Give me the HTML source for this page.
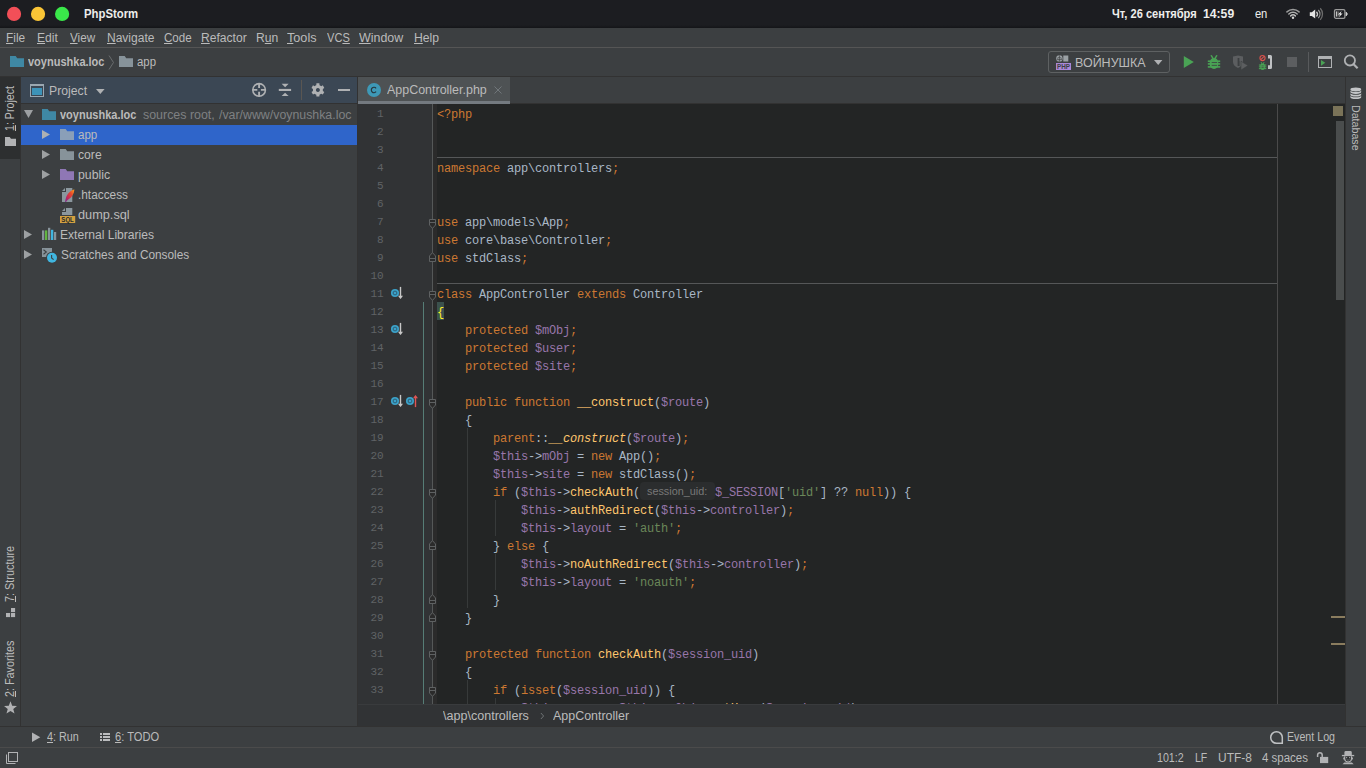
<!DOCTYPE html><html><head><meta charset="utf-8"><title>PhpStorm</title><style>

html,body{margin:0;padding:0;background:#3c3f41;}
body{width:1366px;height:768px;position:relative;overflow:hidden;font-family:"Liberation Sans",sans-serif;}
div,svg,.t{position:absolute;}
.t{white-space:pre;line-height:normal;font-family:"Liberation Sans",sans-serif;}
.mo{font-family:"Liberation Mono",monospace;}
u{text-decoration:underline;text-underline-offset:1px;}
.m{display:inline-block;width:0;height:0;}

</style></head><body>
<div style="left:0px;top:0px;width:1366px;height:28px;background:#1c1d21;"></div>
<div style="left:0px;top:25px;width:1366px;height:3px;background:linear-gradient(#1c1d21,#141518);"></div>
<div style="left:0px;top:28px;width:1366px;height:19px;background:#3c3f41;"></div>
<div style="left:0px;top:47px;width:1366px;height:1px;background:#555555;"></div>
<div style="left:0px;top:48px;width:1366px;height:28px;background:#3c3f41;"></div>
<div style="left:0px;top:76px;width:1366px;height:1px;background:#323232;"></div>
<div style="left:0px;top:77px;width:20px;height:649px;background:#3c3f41;"></div>
<div style="left:0px;top:77px;width:20px;height:82px;background:#2d2f30;"></div>
<div style="left:20px;top:77px;width:1px;height:649px;background:#323232;"></div>
<div style="left:21px;top:77px;width:336px;height:27px;background:#3b4754;"></div>
<div style="left:21px;top:103px;width:336px;height:1px;background:#323232;"></div>
<div style="left:21px;top:104px;width:336px;height:622px;background:#3c3f41;"></div>
<div style="left:21px;top:125px;width:336px;height:20px;background:#2f65ca;"></div>
<div style="left:357px;top:77px;width:1px;height:649px;background:#323232;"></div>
<div style="left:358px;top:77px;width:987px;height:27px;background:#3c3f41;"></div>
<div style="left:358px;top:77px;width:152px;height:24px;background:#4e5254;"></div>
<div style="left:358px;top:101px;width:152px;height:3px;background:#747a80;"></div>
<div style="left:510px;top:103px;width:835px;height:1px;background:#323232;"></div>
<div style="left:358px;top:104px;width:987px;height:600px;background:#232525;"></div>
<div style="left:358px;top:104px;width:74px;height:600px;background:#313335;"></div>
<div style="left:432px;top:104px;width:1px;height:600px;background:#555858;"></div>
<div style="left:433px;top:104px;width:4px;height:600px;background:#2b2b2b;"></div>
<div style="left:423px;top:302px;width:1px;height:402px;background:#567d76;"></div>
<div style="left:1277px;top:104px;width:1px;height:600px;background:#4a4a4a;"></div>
<div style="left:437px;top:157px;width:840px;height:1px;background:#555758;"></div>
<div style="left:437px;top:283px;width:840px;height:1px;background:#555758;"></div>
<div style="left:437px;top:302px;width:7px;height:18px;background:#3b514d;"></div>
<div style="left:1333px;top:106px;width:10px;height:10px;background:#7a7358;"></div>
<div style="left:1336px;top:121px;width:8px;height:179px;background:#4a4d4d;"></div>
<div style="left:1331px;top:616px;width:14px;height:2px;background:#8a7c5e;"></div>
<div style="left:1331px;top:643px;width:14px;height:2px;background:#8a7c5e;"></div>
<div style="left:358px;top:704px;width:987px;height:22px;background:#313335;z-index:2;"></div>
<div style="left:358px;top:704px;width:987px;height:1px;background:#393b3d;z-index:2;"></div>
<div style="left:1345px;top:77px;width:1px;height:649px;background:#323232;"></div>
<div style="left:1346px;top:77px;width:20px;height:649px;background:#3c3f41;"></div>
<div style="left:0px;top:726px;width:1366px;height:1px;background:#323232;"></div>
<div style="left:0px;top:727px;width:1366px;height:20px;background:#3c3f41;"></div>
<div style="left:0px;top:747px;width:1366px;height:1px;background:#4b4b4b;"></div>
<div style="left:0px;top:748px;width:1366px;height:20px;background:#3c3f41;"></div>
<div style="left:640px;top:482px;width:75px;height:18px;background:#2b2d2e;border-radius:4px;"></div>
<div style="left:301px;top:80px;width:1px;height:20px;background:#5a5652;"></div>
<div style="left:338px;top:89px;width:12px;height:2px;background:#afb1b3;"></div>
<div style="left:467px;top:428px;width:1px;height:180px;background:#373a3a;"></div>
<div style="left:495px;top:500px;width:1px;height:36px;background:#373a3a;"></div>
<div style="left:495px;top:554px;width:1px;height:36px;background:#373a3a;"></div>
<div style="left:467px;top:680px;width:1px;height:36px;background:#373a3a;"></div>
<div style="left:495px;top:698px;width:1px;height:18px;background:#373a3a;"></div>
<div style="left:1048px;top:51px;width:120px;height:20px;border:1px solid #5e6162;border-radius:3px;"></div>
<div style="left:1287px;top:57px;width:10px;height:10px;background:#5c5e60;"></div>
<div style="left:1308px;top:52px;width:1px;height:20px;background:#585a5c;"></div>
<div style="left:100px;top:733px;width:2px;height:2px;background:#bbbcbe;"></div>
<div style="left:103px;top:733px;width:7px;height:2px;background:#bbbcbe;"></div>
<div style="left:100px;top:736px;width:2px;height:2px;background:#bbbcbe;"></div>
<div style="left:103px;top:736px;width:7px;height:2px;background:#bbbcbe;"></div>
<div style="left:100px;top:739px;width:2px;height:2px;background:#bbbcbe;"></div>
<div style="left:103px;top:739px;width:7px;height:2px;background:#bbbcbe;"></div>
<svg style="left:0px;top:0px;" width="80" height="28" viewBox="0 0 80 28"><circle cx="14.05" cy="13.9" r="7.1" fill="#f24f58"/><circle cx="38.05" cy="13.9" r="7.1" fill="#fac536"/><circle cx="62.1" cy="13.9" r="7.1" fill="#3ae84a"/></svg>
<svg style="left:10px;top:56px;" width="14" height="11" viewBox="0 0 14 11"><path d="M0,0H5.7L7.2,2.2H14V11H0Z" fill="#3f88a4"/></svg>
<svg style="left:119px;top:56px;" width="14" height="11" viewBox="0 0 14 11"><path d="M0,0H5.7L7.2,2.2H14V11H0Z" fill="#87939a"/></svg>
<svg style="left:108px;top:55px;" width="7" height="15" viewBox="0 0 7 15"><path d="M1,0.5L5.5,7.5L1,14.5" fill="none" stroke="#6a6d6f" stroke-width="1"/></svg>
<svg style="left:24px;top:110px;" width="9" height="8" viewBox="0 0 9 8"><path d="M0,0H9L4.5,8Z" fill="#9da0a2"/></svg>
<svg style="left:42px;top:109px;" width="14" height="11" viewBox="0 0 14 11"><path d="M0,0H5.7L7.2,2.2H14V11H0Z" fill="#3f88a4"/></svg>
<svg style="left:42px;top:130px;" width="8" height="9" viewBox="0 0 8 9"><path d="M0,0L8,4.5L0,9Z" fill="#adb0b3"/></svg>
<svg style="left:60px;top:129px;" width="14" height="11" viewBox="0 0 14 11"><path d="M0,0H5.7L7.2,2.2H14V11H0Z" fill="#8a9fb8"/></svg>
<svg style="left:42px;top:150px;" width="8" height="9" viewBox="0 0 8 9"><path d="M0,0L8,4.5L0,9Z" fill="#9da0a2"/></svg>
<svg style="left:60px;top:149px;" width="14" height="11" viewBox="0 0 14 11"><path d="M0,0H5.7L7.2,2.2H14V11H0Z" fill="#87939a"/></svg>
<svg style="left:42px;top:170px;" width="8" height="9" viewBox="0 0 8 9"><path d="M0,0L8,4.5L0,9Z" fill="#9da0a2"/></svg>
<svg style="left:60px;top:169px;" width="14" height="11" viewBox="0 0 14 11"><path d="M0,0H5.7L7.2,2.2H14V11H0Z" fill="#8f77b5"/></svg>
<svg style="left:24px;top:230px;" width="8" height="9" viewBox="0 0 8 9"><path d="M0,0L8,4.5L0,9Z" fill="#9da0a2"/></svg>
<svg style="left:24px;top:250px;" width="8" height="9" viewBox="0 0 8 9"><path d="M0,0L8,4.5L0,9Z" fill="#9da0a2"/></svg>
<svg style="left:60px;top:187px;" width="16" height="16" viewBox="0 0 16 16"><defs><linearGradient id="fe" x1="1" y1="0" x2="0" y2="1"><stop offset="0" stop-color="#f7a41d"/><stop offset="0.35" stop-color="#e8472b"/><stop offset="0.7" stop-color="#c4265c"/><stop offset="1" stop-color="#6f2c91"/></linearGradient></defs>
<path d="M6,1H12.3V15H2V5H6Z" fill="#8b979e"/><path d="M2,4L5,1V4Z" fill="#8b979e"/>
<path d="M14.4,2.4C10.8,3 7.6,6.3 6.2,10C5.6,11.6 5.3,13.2 5.1,14.9L6.1,15C6.7,13.6 7.9,12.8 9.3,11.8C12,9.7 14.2,6.8 14.4,2.4Z" fill="url(#fe)"/></svg>
<svg style="left:59px;top:207px;" width="17" height="17" viewBox="0 0 17 17"><path d="M7,1H13.3V8H3V5H7Z" fill="#8b979e"/><path d="M3,4L6,1V4Z" fill="#8b979e"/>
<rect x="1" y="9" width="15.2" height="7" fill="#d2a040"/>
<text x="8.6" y="15.2" font-family="Liberation Sans" font-weight="bold" font-size="6.6" text-anchor="middle" fill="#25282a" textLength="12.5" lengthAdjust="spacingAndGlyphs">SQL</text></svg>
<svg style="left:42px;top:227px;" width="15" height="14" viewBox="0 0 15 14"><rect x="0" y="3.4" width="2.3" height="9.6" fill="#87939a"/><rect x="3" y="3.4" width="2.3" height="9.6" fill="#62b543"/><rect x="6" y="0.8" width="2.3" height="12.2" fill="#87939a"/><rect x="9" y="2.8" width="2.3" height="10.2" fill="#40b6e0"/><rect x="12" y="5" width="2.2" height="8" fill="#87939a"/></svg>
<svg style="left:41px;top:247px;" width="18" height="17" viewBox="0 0 18 17"><rect x="1" y="1" width="10" height="9" fill="#87939a"/><path d="M2.5,2.8L5.3,5L2.5,7.2" fill="none" stroke="#3c3f41" stroke-width="1.1"/><circle cx="11" cy="10.8" r="6" fill="#3c3f41"/><circle cx="11" cy="10.8" r="5" fill="#40b6e0"/><path d="M10.6,8V11L12.6,12.6" fill="none" stroke="#3c3f41" stroke-width="1.1"/></svg>
<svg style="left:30px;top:84px;" width="14" height="13" viewBox="0 0 14 13"><rect x="0.5" y="0.5" width="13" height="12" fill="none" stroke="#9aa7b0" stroke-width="1"/><rect x="0" y="0" width="14" height="2" fill="#9aa7b0"/><rect x="2" y="4" width="10" height="7" fill="#3d93b8"/></svg>
<svg style="left:96px;top:89px;" width="9" height="5" viewBox="0 0 9 5"><path d="M0,0H8.6L4.3,5Z" fill="#afb1b3"/></svg>
<svg style="left:251px;top:82px;" width="16" height="16" viewBox="0 0 16 16"><circle cx="8.1" cy="7.9" r="6.3" fill="none" stroke="#afb1b3" stroke-width="1.6"/><path d="M1.6,7.9H6.3M9.9,7.9H14.6M8.1,1.4V6.1M8.1,9.7V14.4" stroke="#afb1b3" stroke-width="1.9" fill="none"/></svg>
<svg style="left:278px;top:83px;" width="14" height="14" viewBox="0 0 14 14"><rect x="0.8" y="5.9" width="12.3" height="2.1" fill="#afb1b3"/><path d="M3.6,0.8H10.6L7.1,4.2Z" fill="#afb1b3"/><path d="M3.6,13.1H10.6L7.1,9.8Z" fill="#afb1b3"/></svg>
<svg style="left:310px;top:82px;" width="16" height="16" viewBox="0 0 16 16"><path d="M5.51,3.51L6.29,3.17L6.42,1.37L9.38,1.37L9.51,3.17L10.51,3.64L11.20,4.14L12.82,3.35L14.30,5.91L12.80,6.92L12.90,8.03L12.80,8.88L14.30,9.89L12.82,12.45L11.20,11.66L10.29,12.29L9.51,12.63L9.38,14.43L6.42,14.43L6.29,12.63L5.29,12.16L4.60,11.66L2.98,12.45L1.50,9.89L3.00,8.88L2.90,7.77L3.00,6.92L1.50,5.91L2.98,3.35L4.60,4.14ZM7.9,5.9a2,2 0 1,0 0.001,0Z" fill="#afb1b3" fill-rule="evenodd"/></svg>
<svg style="left:366px;top:82px;" width="16" height="16" viewBox="0 0 16 16"><circle cx="8" cy="8" r="7" fill="#3e99b7"/><path d="M10.1,6.3A2.7,2.7 0 1,0 10.1,9.7" fill="none" stroke="#26353d" stroke-width="1.1"/></svg>
<svg style="left:494px;top:86px;" width="8" height="8" viewBox="0 0 8 8"><path d="M0.5,0.5L7.5,7.5M7.5,0.5L0.5,7.5" stroke="#70767a" stroke-width="1" fill="none"/></svg>
<svg style="left:538px;top:711px;z-index:3;" width="8" height="10" viewBox="0 0 8 10"><path d="M2.9,2L5.6,5L2.9,8" fill="none" stroke="#6e7274" stroke-width="1"/></svg>
<svg style="left:390px;top:286px;" width="14" height="14" viewBox="0 0 14 14"><circle cx="5" cy="7" r="4.05" fill="#3ba2c9"/><circle cx="5" cy="7" r="1.9" fill="none" stroke="#2b566c" stroke-width="0.9"/><path d="M10.5,0.9V12.2" stroke="#c8c8c8" stroke-width="1.4" fill="none"/><path d="M8,9.8H13L10.5,13.1Z" fill="#c8c8c8"/></svg>
<svg style="left:390px;top:322px;" width="14" height="14" viewBox="0 0 14 14"><circle cx="5" cy="7" r="4.05" fill="#3ba2c9"/><circle cx="5" cy="7" r="1.9" fill="none" stroke="#2b566c" stroke-width="0.9"/><path d="M10.5,0.9V12.2" stroke="#c8c8c8" stroke-width="1.4" fill="none"/><path d="M8,9.8H13L10.5,13.1Z" fill="#c8c8c8"/></svg>
<svg style="left:390px;top:394px;" width="14" height="14" viewBox="0 0 14 14"><circle cx="5" cy="7" r="4.05" fill="#3ba2c9"/><circle cx="5" cy="7" r="1.9" fill="none" stroke="#2b566c" stroke-width="0.9"/><path d="M10.5,0.9V12.2" stroke="#c8c8c8" stroke-width="1.4" fill="none"/><path d="M8,9.8H13L10.5,13.1Z" fill="#c8c8c8"/></svg>
<svg style="left:405px;top:394px;" width="14" height="14" viewBox="0 0 14 14"><circle cx="5" cy="7" r="4.05" fill="#3ba2c9"/><circle cx="5" cy="7" r="1.9" fill="none" stroke="#2b566c" stroke-width="0.9"/><path d="M10.5,1.8V13.1" stroke="#e05555" stroke-width="1.4" fill="none"/><path d="M8,4.2H13L10.5,0.9Z" fill="#e05555"/></svg>
<svg style="left:428px;top:218px;" width="9" height="12" viewBox="0 0 9 12"><path d="M1.5,1.5H7.5V7L4.5,10.4L1.5,7Z" fill="#2b2b2b" stroke="#5e6162" stroke-width="1"/><path d="M1.5,4.5H7.5" stroke="#5e6162" stroke-width="1"/></svg>
<svg style="left:428px;top:290px;" width="9" height="12" viewBox="0 0 9 12"><path d="M1.5,1.5H7.5V7L4.5,10.4L1.5,7Z" fill="#2b2b2b" stroke="#5e6162" stroke-width="1"/><path d="M1.5,4.5H7.5" stroke="#5e6162" stroke-width="1"/></svg>
<svg style="left:428px;top:398px;" width="9" height="12" viewBox="0 0 9 12"><path d="M1.5,1.5H7.5V7L4.5,10.4L1.5,7Z" fill="#2b2b2b" stroke="#5e6162" stroke-width="1"/><path d="M1.5,4.5H7.5" stroke="#5e6162" stroke-width="1"/></svg>
<svg style="left:428px;top:488px;" width="9" height="12" viewBox="0 0 9 12"><path d="M1.5,1.5H7.5V7L4.5,10.4L1.5,7Z" fill="#2b2b2b" stroke="#5e6162" stroke-width="1"/><path d="M1.5,4.5H7.5" stroke="#5e6162" stroke-width="1"/></svg>
<svg style="left:428px;top:650px;" width="9" height="12" viewBox="0 0 9 12"><path d="M1.5,1.5H7.5V7L4.5,10.4L1.5,7Z" fill="#2b2b2b" stroke="#5e6162" stroke-width="1"/><path d="M1.5,4.5H7.5" stroke="#5e6162" stroke-width="1"/></svg>
<svg style="left:428px;top:686px;" width="9" height="12" viewBox="0 0 9 12"><path d="M1.5,1.5H7.5V7L4.5,10.4L1.5,7Z" fill="#2b2b2b" stroke="#5e6162" stroke-width="1"/><path d="M1.5,4.5H7.5" stroke="#5e6162" stroke-width="1"/></svg>
<svg style="left:428px;top:251px;" width="9" height="12" viewBox="0 0 9 12"><path d="M1.5,10.5H7.5V5L4.5,1.6L1.5,5Z" fill="#2b2b2b" stroke="#5e6162" stroke-width="1"/><path d="M1.5,7.5H7.5" stroke="#5e6162" stroke-width="1"/></svg>
<svg style="left:428px;top:539px;" width="9" height="12" viewBox="0 0 9 12"><path d="M1.5,10.5H7.5V5L4.5,1.6L1.5,5Z" fill="#2b2b2b" stroke="#5e6162" stroke-width="1"/><path d="M1.5,7.5H7.5" stroke="#5e6162" stroke-width="1"/></svg>
<svg style="left:428px;top:593px;" width="9" height="12" viewBox="0 0 9 12"><path d="M1.5,10.5H7.5V5L4.5,1.6L1.5,5Z" fill="#2b2b2b" stroke="#5e6162" stroke-width="1"/><path d="M1.5,7.5H7.5" stroke="#5e6162" stroke-width="1"/></svg>
<svg style="left:428px;top:611px;" width="9" height="12" viewBox="0 0 9 12"><path d="M1.5,10.5H7.5V5L4.5,1.6L1.5,5Z" fill="#2b2b2b" stroke="#5e6162" stroke-width="1"/><path d="M1.5,7.5H7.5" stroke="#5e6162" stroke-width="1"/></svg>
<svg style="left:1056px;top:55px;" width="16" height="16" viewBox="0 0 16 16"><circle cx="3.4" cy="3.4" r="3.2" fill="#9aa0a4"/><path d="M1,3.4Q3.4,1.2 5.8,3.4M3.4,0.4V6.4M0.8,4.6H6" stroke="#3c3f41" stroke-width="0.7" fill="none"/>
<rect x="7.3" y="0.5" width="5" height="6" fill="#9aa0a4"/>
<rect x="0" y="8" width="15" height="7" fill="#a987d8"/>
<text x="7.5" y="14.2" font-family="Liberation Sans" font-weight="bold" font-size="6.4" text-anchor="middle" fill="#3c3f41" textLength="13" lengthAdjust="spacingAndGlyphs">PHP</text></svg>
<svg style="left:1154px;top:60px;" width="9" height="5" viewBox="0 0 9 5"><path d="M0,0H8.4L4.2,5Z" fill="#afb1b3"/></svg>
<svg style="left:1183px;top:55px;" width="12" height="14" viewBox="0 0 12 14"><path d="M0.8,1L10.8,7L0.8,13Z" fill="#4aa355"/></svg>
<svg style="left:1207px;top:55px;" width="14" height="15" viewBox="0 0 14 15"><g transform="translate(0.5,0) scale(1)" fill="#4aa355" stroke="none">
<path d="M6.5,3C9.2,3 10.9,5 10.9,8.6C10.9,12 9.2,14 6.5,14C3.8,14 2.1,12 2.1,8.6C2.1,5 3.8,3 6.5,3Z"/>
<path d="M2.9,0.4L4.3,0L6.4,3.6L5,4Z"/><path d="M10.1,0.4L8.7,0L6.6,3.6L8,4Z"/>
<rect x="0.3" y="5.4" width="12.4" height="1.6"/><rect x="0.3" y="8.1" width="12.4" height="1.6"/><rect x="0.3" y="11.1" width="12.4" height="1.6"/>
</g><g transform="translate(0.5,0) scale(1)" fill="#3c3f41"><rect x="4.2" y="7.05" width="5.4" height="0.8"/><rect x="4.2" y="9.9" width="5.4" height="0.8"/></g></svg>
<svg style="left:1232px;top:55px;" width="17" height="16" viewBox="0 0 17 16"><path d="M1,1.6L6,0.6L11,1.6V7C11,10 8.5,12 6,13C3.5,12 1,10 1,7Z" fill="#5c5e60"/><rect x="5.6" y="3" width="2" height="8" fill="#3c3f41"/><path d="M7.6,3H9.4V6L7.6,6Z" fill="#5c5e60"/><path d="M9,6.2L16,10.6L9,15Z" fill="#5c5e60" stroke="#3c3f41" stroke-width="0.6"/></svg>
<svg style="left:1258px;top:54px;" width="15" height="17" viewBox="0 0 15 17"><circle cx="4.5" cy="4" r="2.55" fill="none" stroke="#d8514c" stroke-width="1.15"/><path d="M2.8,5.7L6.2,2.3" stroke="#d8514c" stroke-width="1.1"/><g fill="#4aa355"><ellipse cx="4.6" cy="12.7" rx="2.3" ry="3.2"/><path d="M2.6,8.2L3.5,8L4.7,10.2L3.9,10.5Z"/><path d="M6.6,8.2L5.7,8L4.5,10.2L5.3,10.5Z"/><rect x="0.9" y="10.5" width="7.4" height="1.05"/><rect x="0.9" y="12.3" width="7.4" height="1.05"/><rect x="0.9" y="14.1" width="7.4" height="1.05"/></g><g fill="#3c3f41"><rect x="3.5" y="11.6" width="2.2" height="0.65"/><rect x="3.5" y="13.4" width="2.2" height="0.65"/></g><path d="M10,1H12.6Q14,1 14,2.5V13.5Q14,15 12.6,15H10V11.2H12V4.6H10Z" fill="#bfc1c3"/></svg>
<svg style="left:1318px;top:56px;" width="14" height="12" viewBox="0 0 14 12"><rect x="0.5" y="0.5" width="13" height="11" fill="#3c3f41" stroke="#afb1b3" stroke-width="1"/><rect x="0" y="0" width="14" height="3" fill="#afb1b3"/><path d="M3,4L7.3,6.8L3,9.7Z" fill="#4aa355"/></svg>
<svg style="left:1343px;top:54px;" width="16" height="16" viewBox="0 0 16 16"><circle cx="6.9" cy="6.4" r="5.1" fill="none" stroke="#afb1b3" stroke-width="1.8"/><path d="M10.6,10.2L14.6,14.3" stroke="#afb1b3" stroke-width="2.2"/></svg>
<svg style="left:1284px;top:5.2px;" width="18" height="16" viewBox="0 0 18 16"><g fill="none" stroke-linecap="round"><path d="M2.93,6.89A8.9,8.9 0 0,1 15.07,6.89" stroke="#9b9b9b" stroke-width="1.5"/><path d="M4.84,8.94A6.1,6.1 0 0,1 13.16,8.94" stroke="#adadad" stroke-width="1.5"/><path d="M6.68,10.91A3.4,3.4 0 0,1 11.32,10.91" stroke="#c0c0c0" stroke-width="1.5"/></g><circle cx="9" cy="12.7" r="1.2" fill="#d6d6d6"/></svg>
<svg style="left:1308px;top:6px;" width="18" height="16" viewBox="0 0 18 16"><path d="M1.8,6.3H3.8L7.2,3.6V12.6L3.8,9.9H1.8Z" fill="#e4e4e4"/><g fill="none"><path d="M8.48,5.69A3.6,3.6 0 0,1 8.48,10.51" stroke="#c8c8c8" stroke-width="1.3"/><path d="M10.33,4.02A6.1,6.1 0 0,1 10.33,12.18" stroke="#9a9a9a" stroke-width="1.3"/><path d="M12.27,2.28A8.7,8.7 0 0,1 12.27,13.92" stroke="#6c6c6c" stroke-width="1.3"/></g></svg>
<svg style="left:1332px;top:7px;" width="18" height="14" viewBox="0 0 18 14"><rect x="2.5" y="2.7" width="10.4" height="8.6" rx="1.4" fill="#1c1d21" stroke="#9c9c9c" stroke-width="1.3"/><rect x="3.9" y="4.4" width="1.3" height="5.2" fill="#c4c4c4"/><rect x="5.2" y="4.4" width="2" height="5.2" fill="#5c5c5c"/><path d="M9.6,4L5.9,7.5H8L6.8,10.2L10.6,6.5H8.6Z" fill="#ececec"/><path d="M13.9,5V9L16.1,7Z" fill="#cfcfcf"/><rect x="13.8" y="5" width="1" height="4" fill="#cfcfcf"/></svg>
<svg style="left:5px;top:137px;" width="11" height="9" viewBox="0 0 11 9"><path d="M0,0H4.7L6,1.8H11V9H0Z" fill="#b1b2b4"/></svg>
<svg style="left:5px;top:607px;" width="11" height="11" viewBox="0 0 11 11"><rect x="6" y="1" width="4.1" height="4.1" fill="#b1b2b4"/><rect x="1" y="6" width="4.1" height="4.1" fill="#b1b2b4"/><rect x="6" y="6" width="4.1" height="4.1" fill="#b1b2b4"/></svg>
<svg style="left:3px;top:700px;" width="15" height="15" viewBox="0 0 15 15"><path d="M7.50,1.20L9.20,5.65L13.97,5.90L10.26,8.90L11.50,13.50L7.50,10.90L3.50,13.50L4.74,8.90L1.03,5.90L5.80,5.65Z" fill="#b1b2b4"/></svg>
<svg style="left:1349px;top:87px;" width="14" height="14" viewBox="0 0 14 14"><g fill="#c3c5c7"><ellipse cx="6.8" cy="2.5" rx="5.4" ry="1.9"/><path d="M1.4,3.3A5.4,1.8 0 0,0 12.2,3.3V5.1A5.4,1.8 0 0,1 1.4,5.1Z"/><path d="M1.4,5.9A5.4,1.8 0 0,0 12.2,5.9V7.7A5.4,1.8 0 0,1 1.4,7.7Z"/><path d="M1.4,8.5A5.4,1.8 0 0,0 12.2,8.5V10.3A5.4,1.8 0 0,1 1.4,10.3Z"/></g></svg>
<svg style="left:31px;top:732px;" width="10" height="11" viewBox="0 0 10 11"><path d="M1,0.5L9.3,5.3L1,10Z" fill="#b1b2b4"/></svg>
<svg style="left:1269px;top:730px;" width="15" height="15" viewBox="0 0 15 15"><path d="M13.3,7.5A5.8,5.8 0 1,0 7.5,13.3H13.3Z" fill="none" stroke="#c0c2c4" stroke-width="1.5"/></svg>
<svg style="left:5px;top:751px;" width="14" height="14" viewBox="0 0 14 14"><rect x="3.5" y="1.5" width="9" height="9" fill="none" stroke="#b1b2b4" stroke-width="1"/><path d="M1.5,3.5V12.5H10.5" fill="none" stroke="#b1b2b4" stroke-width="1"/></svg>
<svg style="left:1316px;top:751px;" width="13" height="13" viewBox="0 0 13 13"><path d="M1.6,5.9V4A2.3,2.3 0 0,1 6.2,4V6" fill="none" stroke="#b1b2b4" stroke-width="1.5"/><rect x="4" y="5.9" width="8.2" height="6.2" fill="#b1b2b4"/></svg>
<svg style="left:1341px;top:750px;" width="14" height="15" viewBox="0 0 14 15"><path d="M3.4,4.9V2.4Q3.4,1 4.8,1H9.4Q10.8,1 10.8,2.4V4.9Z" fill="#b1b2b4"/><rect x="0.9" y="4.9" width="12.3" height="1.3" fill="#b1b2b4"/><path d="M3.2,6.2H11V7.2Q12,7.2 12,8.4Q12,9.6 11,9.6Q10.6,12.2 7.1,12.6Q3.6,12.2 3.2,9.6Q2.2,9.6 2.2,8.4Q2.2,7.2 3.2,7.2Z" fill="#b1b2b4"/><path d="M4.3,6.3H9.9V9Q9.9,11.2 7.1,11.6Q4.3,11.2 4.3,9Z" fill="#2c2e30"/><rect x="5" y="7.2" width="1.2" height="1" fill="#b1b2b4"/><rect x="8" y="7.2" width="1.2" height="1" fill="#b1b2b4"/><path d="M5.7,9.7Q7.1,10.6 8.5,9.7" stroke="#8a8c8e" stroke-width="0.7" fill="none"/><path d="M1.5,14.2L3.3,12.5H10.9L12.7,14.2Z" fill="#b1b2b4"/></svg>
<span class="t" style="font-size:12.5px;color:#eeeeec;font-weight:bold;left:83.5px;top:7.2px;transform-origin:0 0;transform:scaleX(0.9076);">PhpStorm</span>
<span class="t" style="font-size:12.5px;color:#eeeeec;font-weight:bold;left:1112.0px;top:7.2px;transform-origin:0 0;transform:scaleX(0.8852);">Чт, 26 сентября</span>
<span class="t" style="font-size:12.5px;color:#eeeeec;font-weight:bold;left:1203.2px;top:7.2px;transform-origin:0 0;transform:scaleX(0.9744);">14:59</span>
<span class="t" style="font-size:13px;color:#eeeeec;letter-spacing:-0.393px;left:1255.2px;top:6px;transform-origin:0 0;transform:scaleX(0.8600);">en</span>
<span class="t" style="font-size:12.5px;color:#bbbbbb;left:5.85px;top:31px;transform-origin:0 0;transform:scaleX(0.9484);"><u>F</u>ile</span>
<span class="t" style="font-size:12.5px;color:#bbbbbb;left:36.63px;top:31px;transform-origin:0 0;transform:scaleX(0.9684);"><u>E</u>dit</span>
<span class="t" style="font-size:12.5px;color:#bbbbbb;left:70.3px;top:31px;transform-origin:0 0;transform:scaleX(0.9339);"><u>V</u>iew</span>
<span class="t" style="font-size:12.5px;color:#bbbbbb;left:106.84px;top:31px;transform-origin:0 0;transform:scaleX(0.9611);"><u>N</u>avigate</span>
<span class="t" style="font-size:12.5px;color:#bbbbbb;left:164.3px;top:31px;transform-origin:0 0;transform:scaleX(0.9255);"><u>C</u>ode</span>
<span class="t" style="font-size:12.5px;color:#bbbbbb;left:200.63px;top:31px;transform-origin:0 0;transform:scaleX(0.9679);"><u>R</u>efactor</span>
<span class="t" style="font-size:12.5px;color:#bbbbbb;left:255.53px;top:31px;transform-origin:0 0;transform:scaleX(0.9691);">R<u>u</u>n</span>
<span class="t" style="font-size:12.5px;color:#bbbbbb;left:287.1px;top:31px;transform-origin:0 0;transform:scaleX(1.0128);"><u>T</u>ools</span>
<span class="t" style="font-size:12.5px;color:#bbbbbb;left:326.5px;top:31px;transform-origin:0 0;transform:scaleX(0.8871);">VC<u>S</u></span>
<span class="t" style="font-size:12.5px;color:#bbbbbb;left:359.2px;top:31px;transform-origin:0 0;transform:scaleX(0.9927);"><u>W</u>indow</span>
<span class="t" style="font-size:12.5px;color:#bbbbbb;left:413.53px;top:31px;transform-origin:0 0;transform:scaleX(0.9735);"><u>H</u>elp</span>
<span class="t" style="font-size:12.5px;color:#bbbbbb;font-weight:bold;left:28.0px;top:55px;transform-origin:0 0;transform:scaleX(0.8805);">voynushka.loc</span>
<span class="t" style="font-size:12.5px;color:#bbbbbb;left:137.4px;top:55px;transform-origin:0 0;transform:scaleX(0.9089);">app</span>
<span class="t" style="font-size:12.5px;color:#bbbbbb;left:48.62px;top:84px;transform-origin:0 0;transform:scaleX(0.9784);">Project</span>
<span class="t" style="font-size:12.5px;color:#bbbbbb;font-weight:bold;left:60.2px;top:108px;transform-origin:0 0;transform:scaleX(0.8793);">voynushka.loc</span>
<span class="t" style="font-size:12.5px;color:#7f8183;left:142.5px;top:108px;transform-origin:0 0;transform:scaleX(0.9933);">sources root,</span>
<span class="t" style="font-size:12.5px;color:#7f8183;left:219.0px;top:108px;transform-origin:0 0;transform:scaleX(0.9879);">/var/www/voynushka.loc</span>
<span class="t" style="font-size:12.5px;color:#bbbbbb;left:78.2px;top:128px;transform-origin:0 0;transform:scaleX(0.9233);">app</span>
<span class="t" style="font-size:12.5px;color:#bbbbbb;left:78.2px;top:148px;transform-origin:0 0;transform:scaleX(0.9727);">core</span>
<span class="t" style="font-size:12.5px;color:#bbbbbb;left:78.2px;top:168px;transform-origin:0 0;transform:scaleX(0.9843);">public</span>
<span class="t" style="font-size:12.5px;color:#bbbbbb;left:77.85px;top:188px;transform-origin:0 0;transform:scaleX(0.9466);">.htaccess</span>
<span class="t" style="font-size:12.5px;color:#bbbbbb;left:78.2px;top:208px;transform-origin:0 0;transform:scaleX(1.0192);">dump.sql</span>
<span class="t" style="font-size:12.5px;color:#bbbbbb;left:59.53px;top:228px;transform-origin:0 0;transform:scaleX(0.9665);">External Libraries</span>
<span class="t" style="font-size:12.5px;color:#bbbbbb;left:60.5px;top:248px;transform-origin:0 0;transform:scaleX(0.9465);">Scratches and Consoles</span>
<span class="t" style="font-size:12.5px;color:#bbbbbb;left:386.6px;top:83px;transform-origin:0 0;transform:scaleX(0.9969);">AppController.php</span>
<span class="t" style="font-size:12.5px;color:#bbbbbb;z-index:3;left:442.8px;top:709.4px;transform-origin:0 0;transform:scaleX(1.0046);">\app\controllers</span>
<span class="t" style="font-size:12.5px;color:#bbbbbb;z-index:3;left:553.4px;top:709.4px;transform-origin:0 0;transform:scaleX(0.9965);">AppController</span>
<span class="t" style="font-size:12px;color:#bbbbbb;left:47.1px;top:730px;transform-origin:0 0;transform:scaleX(0.8996);"><u>4</u>: Run</span>
<span class="t" style="font-size:12px;color:#bbbbbb;left:115.2px;top:730px;transform-origin:0 0;transform:scaleX(0.9272);"><u>6</u>: TODO</span>
<span class="t" style="font-size:12px;color:#bbbbbb;left:1287.0px;top:730px;transform-origin:0 0;transform:scaleX(0.8882);">Event Log</span>
<span class="t" style="font-size:12px;color:#bbbbbb;left:1157.3px;top:751px;transform-origin:0 0;transform:scaleX(0.8895);">101:2</span>
<span class="t" style="font-size:12px;color:#bbbbbb;left:1195.0px;top:751px;transform-origin:0 0;transform:scaleX(0.8776);">LF</span>
<span class="t" style="font-size:12px;color:#bbbbbb;left:1218.0px;top:751px;transform-origin:0 0;transform:scaleX(0.9964);">UTF-8</span>
<span class="t" style="font-size:12px;color:#bbbbbb;left:1262.3px;top:751px;transform-origin:0 0;transform:scaleX(0.9577);">4 spaces</span>
<span class="t" style="font-size:12px;color:#bbbbbb;left:14.2px;top:131.2px;transform-origin:0 0;transform:rotate(-90deg) translate(0.0px,-11px) scaleX(0.8860);"><u>1</u>: Project</span>
<span class="t" style="font-size:12px;color:#bbbbbb;left:14.1px;top:602.4px;transform-origin:0 0;transform:rotate(-90deg) translate(0.0px,-11px) scaleX(0.9045);"><u>7</u>: Structure</span>
<span class="t" style="font-size:12px;color:#bbbbbb;left:14.1px;top:697px;transform-origin:0 0;transform:rotate(-90deg) translate(0.0px,-11px) scaleX(0.8981);"><u>2</u>: Favorites</span>
<span class="t" style="font-size:11px;color:#bbbbbb;left:1351.7px;top:104.7px;transform-origin:0 0;transform:rotate(90deg) translate(0.0px,-10px) scaleX(0.9687);">Database</span>
<span class="t mo" style="font-size:11px;color:#606366;letter-spacing:0.000px;left:377.0px;top:108.0px;">1</span>
<span class="t mo" style="font-size:12px;color:#a9b7c6;letter-spacing:-0.202px;left:437px;top:107.5px;"><span style="color:#cc7832;">&lt;?php</span></span>
<span class="t mo" style="font-size:11px;color:#606366;letter-spacing:0.000px;left:377.0px;top:126.0px;">2</span>
<span class="t mo" style="font-size:11px;color:#606366;letter-spacing:0.000px;left:377.0px;top:144.0px;">3</span>
<span class="t mo" style="font-size:11px;color:#606366;letter-spacing:0.000px;left:377.0px;top:162.0px;">4</span>
<span class="t mo" style="font-size:12px;color:#a9b7c6;letter-spacing:-0.202px;left:437px;top:161.5px;"><span style="color:#cc7832;">namespace </span><span style="color:#a9b7c6;">app\controllers</span><span style="color:#cc7832;">;</span></span>
<span class="t mo" style="font-size:11px;color:#606366;letter-spacing:0.000px;left:377.0px;top:180.0px;">5</span>
<span class="t mo" style="font-size:11px;color:#606366;letter-spacing:0.000px;left:377.0px;top:198.0px;">6</span>
<span class="t mo" style="font-size:11px;color:#606366;letter-spacing:0.000px;left:377.0px;top:216.0px;">7</span>
<span class="t mo" style="font-size:12px;color:#a9b7c6;letter-spacing:-0.202px;left:437px;top:215.5px;"><span style="color:#cc7832;">use </span><span style="color:#a9b7c6;">app\models\App</span><span style="color:#cc7832;">;</span></span>
<span class="t mo" style="font-size:11px;color:#606366;letter-spacing:0.000px;left:377.0px;top:234.0px;">8</span>
<span class="t mo" style="font-size:12px;color:#a9b7c6;letter-spacing:-0.202px;left:437px;top:233.5px;"><span style="color:#cc7832;">use </span><span style="color:#a9b7c6;">core\base\Controller</span><span style="color:#cc7832;">;</span></span>
<span class="t mo" style="font-size:11px;color:#606366;letter-spacing:0.000px;left:377.0px;top:252.0px;">9</span>
<span class="t mo" style="font-size:12px;color:#a9b7c6;letter-spacing:-0.202px;left:437px;top:251.5px;"><span style="color:#cc7832;">use </span><span style="color:#a9b7c6;">stdClass</span><span style="color:#cc7832;">;</span></span>
<span class="t mo" style="font-size:11px;color:#606366;letter-spacing:0.000px;left:370.4px;top:270.0px;">10</span>
<span class="t mo" style="font-size:11px;color:#606366;letter-spacing:0.000px;left:370.4px;top:288.0px;">11</span>
<span class="t mo" style="font-size:12px;color:#a9b7c6;letter-spacing:-0.202px;left:437px;top:287.5px;"><span style="color:#cc7832;">class </span><span style="color:#a9b7c6;">AppController </span><span style="color:#cc7832;">extends </span><span style="color:#a9b7c6;">Controller</span></span>
<span class="t mo" style="font-size:11px;color:#606366;letter-spacing:0.000px;left:370.4px;top:306.0px;">12</span>
<span class="t mo" style="font-size:12px;color:#a9b7c6;letter-spacing:-0.202px;left:437px;top:305.5px;"><span style="color:#ffef28;">{</span></span>
<span class="t mo" style="font-size:11px;color:#606366;letter-spacing:0.000px;left:370.4px;top:324.0px;">13</span>
<span class="t mo" style="font-size:12px;color:#a9b7c6;letter-spacing:-0.202px;left:437px;top:323.5px;"><span style="color:#cc7832;">    protected </span><span style="color:#9876aa;">$mObj</span><span style="color:#cc7832;">;</span></span>
<span class="t mo" style="font-size:11px;color:#606366;letter-spacing:0.000px;left:370.4px;top:342.0px;">14</span>
<span class="t mo" style="font-size:12px;color:#a9b7c6;letter-spacing:-0.202px;left:437px;top:341.5px;"><span style="color:#cc7832;">    protected </span><span style="color:#9876aa;">$user</span><span style="color:#cc7832;">;</span></span>
<span class="t mo" style="font-size:11px;color:#606366;letter-spacing:0.000px;left:370.4px;top:360.0px;">15</span>
<span class="t mo" style="font-size:12px;color:#a9b7c6;letter-spacing:-0.202px;left:437px;top:359.5px;"><span style="color:#cc7832;">    protected </span><span style="color:#9876aa;">$site</span><span style="color:#cc7832;">;</span></span>
<span class="t mo" style="font-size:11px;color:#606366;letter-spacing:0.000px;left:370.4px;top:378.0px;">16</span>
<span class="t mo" style="font-size:11px;color:#606366;letter-spacing:0.000px;left:370.4px;top:396.0px;">17</span>
<span class="t mo" style="font-size:12px;color:#a9b7c6;letter-spacing:-0.202px;left:437px;top:395.5px;"><span style="color:#cc7832;">    public function </span><span style="color:#ffc66d;">__construct</span><span style="color:#a9b7c6;">(</span><span style="color:#9876aa;">$route</span><span style="color:#a9b7c6;">)</span></span>
<span class="t mo" style="font-size:11px;color:#606366;letter-spacing:0.000px;left:370.4px;top:414.0px;">18</span>
<span class="t mo" style="font-size:12px;color:#a9b7c6;letter-spacing:-0.202px;left:437px;top:413.5px;"><span style="color:#a9b7c6;">    {</span></span>
<span class="t mo" style="font-size:11px;color:#606366;letter-spacing:0.000px;left:370.4px;top:432.0px;">19</span>
<span class="t mo" style="font-size:12px;color:#a9b7c6;letter-spacing:-0.202px;left:437px;top:431.5px;"><span style="color:#cc7832;">        parent</span><span style="color:#a9b7c6;">::</span><span style="color:#ffc66d;font-style:italic;">__construct</span><span style="color:#a9b7c6;">(</span><span style="color:#9876aa;">$route</span><span style="color:#a9b7c6;">)</span><span style="color:#cc7832;">;</span></span>
<span class="t mo" style="font-size:11px;color:#606366;letter-spacing:0.000px;left:370.4px;top:450.0px;">20</span>
<span class="t mo" style="font-size:12px;color:#a9b7c6;letter-spacing:-0.202px;left:437px;top:449.5px;"><span style="color:#9876aa;">        $this</span><span style="color:#a9b7c6;">-&gt;</span><span style="color:#9876aa;">mObj</span><span style="color:#a9b7c6;"> = </span><span style="color:#cc7832;">new </span><span style="color:#a9b7c6;">App()</span><span style="color:#cc7832;">;</span></span>
<span class="t mo" style="font-size:11px;color:#606366;letter-spacing:0.000px;left:370.4px;top:468.0px;">21</span>
<span class="t mo" style="font-size:12px;color:#a9b7c6;letter-spacing:-0.202px;left:437px;top:467.5px;"><span style="color:#9876aa;">        $this</span><span style="color:#a9b7c6;">-&gt;</span><span style="color:#9876aa;">site</span><span style="color:#a9b7c6;"> = </span><span style="color:#cc7832;">new </span><span style="color:#a9b7c6;">stdClass()</span><span style="color:#cc7832;">;</span></span>
<span class="t mo" style="font-size:11px;color:#606366;letter-spacing:0.000px;left:370.4px;top:486.0px;">22</span>
<span class="t mo" style="font-size:12px;color:#a9b7c6;letter-spacing:-0.202px;left:437px;top:485.5px;"><span style="color:#cc7832;">        if </span><span style="color:#a9b7c6;">(</span><span style="color:#9876aa;">$this</span><span style="color:#a9b7c6;">-&gt;</span><span style="color:#ffc66d;">checkAuth</span><span style="color:#a9b7c6;">(</span><span style="display:inline-block;width:75px;"></span><span style="color:#9876aa;">$_SESSION</span><span style="color:#a9b7c6;">[</span><span style="color:#6a8759;">&#x27;uid&#x27;</span><span style="color:#a9b7c6;">] ?? </span><span style="color:#cc7832;">null</span><span style="color:#a9b7c6;">)) {</span></span>
<span class="t mo" style="font-size:11px;color:#606366;letter-spacing:0.000px;left:370.4px;top:504.0px;">23</span>
<span class="t mo" style="font-size:12px;color:#a9b7c6;letter-spacing:-0.202px;left:437px;top:503.5px;"><span style="color:#9876aa;">            $this</span><span style="color:#a9b7c6;">-&gt;</span><span style="color:#ffc66d;">authRedirect</span><span style="color:#a9b7c6;">(</span><span style="color:#9876aa;">$this</span><span style="color:#a9b7c6;">-&gt;</span><span style="color:#9876aa;">controller</span><span style="color:#a9b7c6;">)</span><span style="color:#cc7832;">;</span></span>
<span class="t mo" style="font-size:11px;color:#606366;letter-spacing:0.000px;left:370.4px;top:522.0px;">24</span>
<span class="t mo" style="font-size:12px;color:#a9b7c6;letter-spacing:-0.202px;left:437px;top:521.5px;"><span style="color:#9876aa;">            $this</span><span style="color:#a9b7c6;">-&gt;</span><span style="color:#9876aa;">layout</span><span style="color:#a9b7c6;"> = </span><span style="color:#6a8759;">&#x27;auth&#x27;</span><span style="color:#cc7832;">;</span></span>
<span class="t mo" style="font-size:11px;color:#606366;letter-spacing:0.000px;left:370.4px;top:540.0px;">25</span>
<span class="t mo" style="font-size:12px;color:#a9b7c6;letter-spacing:-0.202px;left:437px;top:539.5px;"><span style="color:#a9b7c6;">        } </span><span style="color:#cc7832;">else </span><span style="color:#a9b7c6;">{</span></span>
<span class="t mo" style="font-size:11px;color:#606366;letter-spacing:0.000px;left:370.4px;top:558.0px;">26</span>
<span class="t mo" style="font-size:12px;color:#a9b7c6;letter-spacing:-0.202px;left:437px;top:557.5px;"><span style="color:#9876aa;">            $this</span><span style="color:#a9b7c6;">-&gt;</span><span style="color:#ffc66d;">noAuthRedirect</span><span style="color:#a9b7c6;">(</span><span style="color:#9876aa;">$this</span><span style="color:#a9b7c6;">-&gt;</span><span style="color:#9876aa;">controller</span><span style="color:#a9b7c6;">)</span><span style="color:#cc7832;">;</span></span>
<span class="t mo" style="font-size:11px;color:#606366;letter-spacing:0.000px;left:370.4px;top:576.0px;">27</span>
<span class="t mo" style="font-size:12px;color:#a9b7c6;letter-spacing:-0.202px;left:437px;top:575.5px;"><span style="color:#9876aa;">            $this</span><span style="color:#a9b7c6;">-&gt;</span><span style="color:#9876aa;">layout</span><span style="color:#a9b7c6;"> = </span><span style="color:#6a8759;">&#x27;noauth&#x27;</span><span style="color:#cc7832;">;</span></span>
<span class="t mo" style="font-size:11px;color:#606366;letter-spacing:0.000px;left:370.4px;top:594.0px;">28</span>
<span class="t mo" style="font-size:12px;color:#a9b7c6;letter-spacing:-0.202px;left:437px;top:593.5px;"><span style="color:#a9b7c6;">        }</span></span>
<span class="t mo" style="font-size:11px;color:#606366;letter-spacing:0.000px;left:370.4px;top:612.0px;">29</span>
<span class="t mo" style="font-size:12px;color:#a9b7c6;letter-spacing:-0.202px;left:437px;top:611.5px;"><span style="color:#a9b7c6;">    }</span></span>
<span class="t mo" style="font-size:11px;color:#606366;letter-spacing:0.000px;left:370.4px;top:630.0px;">30</span>
<span class="t mo" style="font-size:11px;color:#606366;letter-spacing:0.000px;left:370.4px;top:648.0px;">31</span>
<span class="t mo" style="font-size:12px;color:#a9b7c6;letter-spacing:-0.202px;left:437px;top:647.5px;"><span style="color:#cc7832;">    protected function </span><span style="color:#ffc66d;">checkAuth</span><span style="color:#a9b7c6;">(</span><span style="color:#9876aa;">$session_uid</span><span style="color:#a9b7c6;">)</span></span>
<span class="t mo" style="font-size:11px;color:#606366;letter-spacing:0.000px;left:370.4px;top:666.0px;">32</span>
<span class="t mo" style="font-size:12px;color:#a9b7c6;letter-spacing:-0.202px;left:437px;top:665.5px;"><span style="color:#a9b7c6;">    {</span></span>
<span class="t mo" style="font-size:11px;color:#606366;letter-spacing:0.000px;left:370.4px;top:684.0px;">33</span>
<span class="t mo" style="font-size:12px;color:#a9b7c6;letter-spacing:-0.202px;left:437px;top:683.5px;"><span style="color:#cc7832;">        if </span><span style="color:#a9b7c6;">(</span><span style="color:#cc7832;">isset</span><span style="color:#a9b7c6;">(</span><span style="color:#9876aa;">$session_uid</span><span style="color:#a9b7c6;">)) {</span></span>
<span class="t mo" style="font-size:12px;color:#a9b7c6;letter-spacing:-0.202px;left:437px;top:701.5px;"><span style="color:#9876aa;">            $this</span><span style="color:#a9b7c6;">-&gt;</span><span style="color:#9876aa;">user</span><span style="color:#a9b7c6;"> = </span><span style="color:#9876aa;">$this</span><span style="color:#a9b7c6;">-&gt;</span><span style="color:#9876aa;">mObj</span><span style="color:#a9b7c6;">-&gt;</span><span style="color:#ffc66d;">getUser</span><span style="color:#a9b7c6;">(</span><span style="color:#9876aa;">$session_uid</span><span style="color:#a9b7c6;">)</span><span style="color:#cc7832;">;</span></span>
<span class="t" style="font-size:11px;color:#787878;left:647.0px;top:485px;transform-origin:0 0;transform:scaleX(0.9854);">session_uid:</span>
<span class="t" style="font-size:12.5px;color:#bbbbbb;left:1074.7px;top:55.7px;transform-origin:0 0;transform:scaleX(0.9995);">ВОЙНУШКА</span>
</body></html>
